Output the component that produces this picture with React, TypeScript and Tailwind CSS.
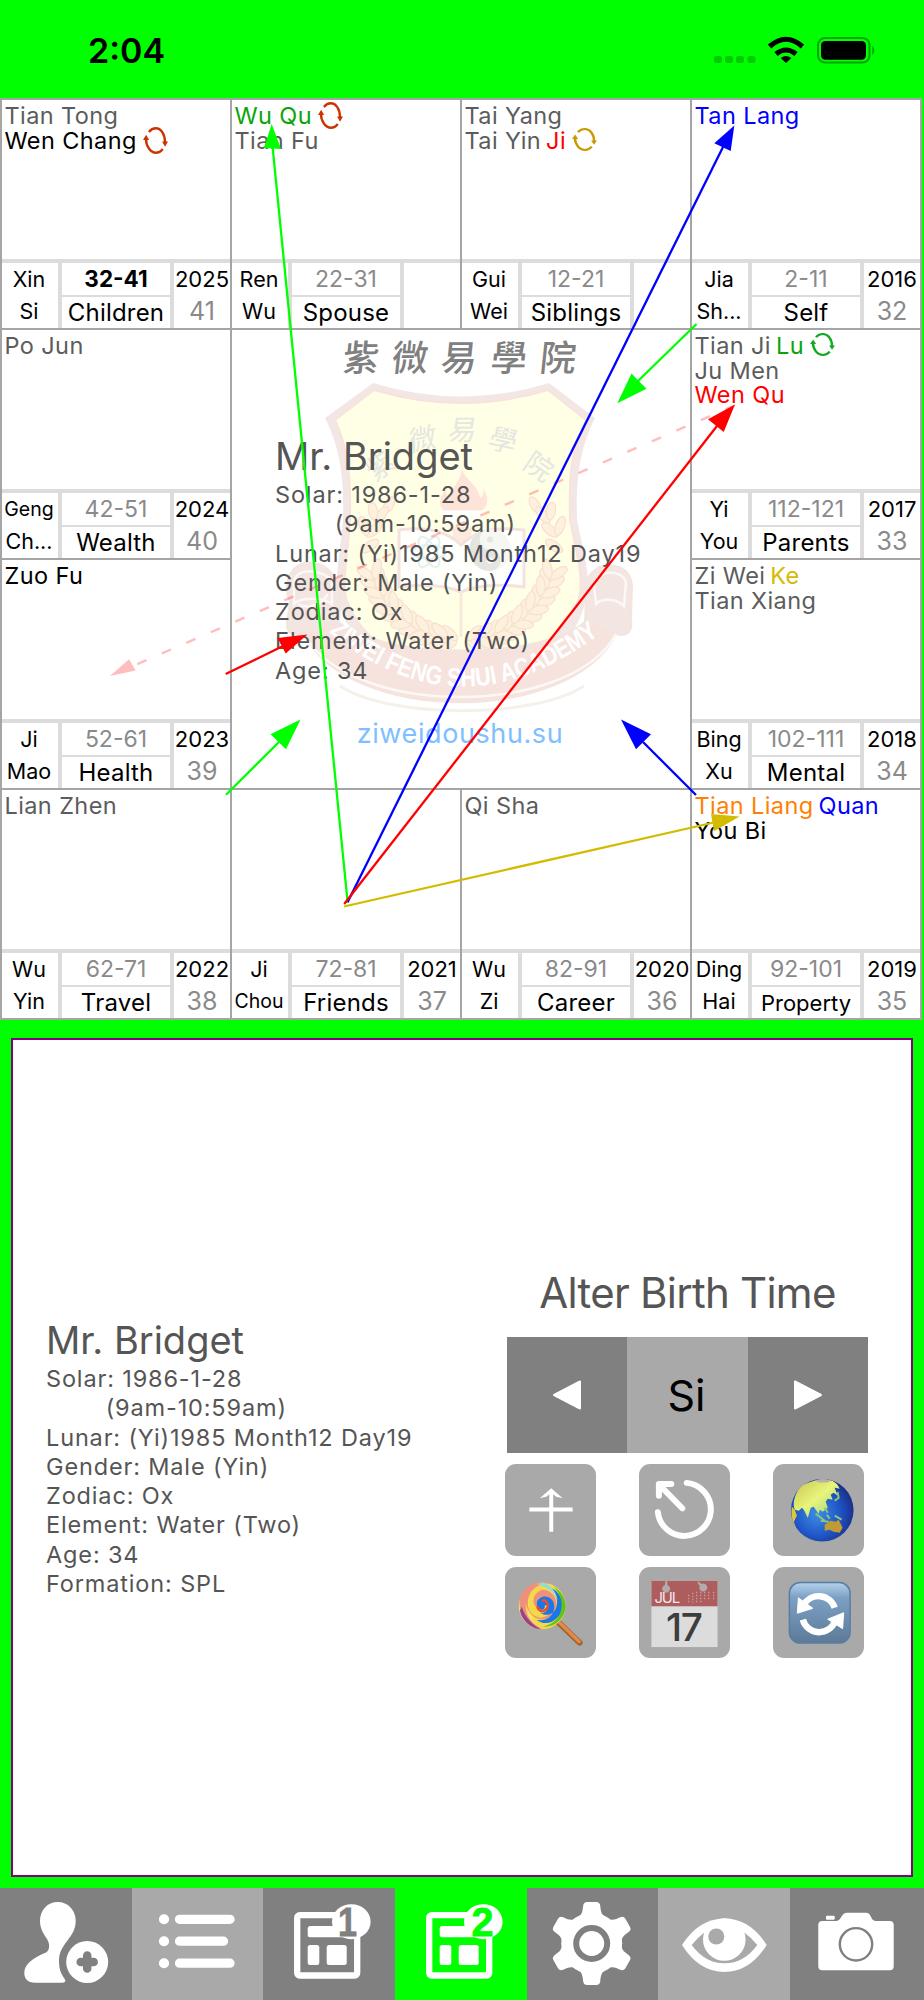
import type { ReactNode } from 'react';

interface Star {
  name: string;
  color?: string;
  tag?: string;
  tagColor?: string;
  cycle?: string;
  tall?: boolean;
}

interface Palace {
  stem: string;
  branch: string;
  range: string;
  name: string;
  year?: string;
  age?: string;
  active?: boolean;
  stars: Star[];
  place: string;
}

const PALACES: Palace[] = [
  {
    stem: 'Xin', branch: 'Si', range: '32-41', name: 'Children', year: '2025', age: '41', active: true,
    place: 'col-start-1 row-start-1',
    stars: [{ name: 'Tian Tong' }, { name: 'Wen Chang', color: 'text-black', cycle: '#cc3300', tall: true }],
  },
  {
    stem: 'Ren', branch: 'Wu', range: '22-31', name: 'Spouse', place: 'col-start-2 row-start-1',
    stars: [{ name: 'Wu Qu', color: 'text-[#0aa50a]', cycle: '#cc3300', tall: true }, { name: 'Tian Fu' }],
  },
  {
    stem: 'Gui', branch: 'Wei', range: '12-21', name: 'Siblings', place: 'col-start-3 row-start-1',
    stars: [{ name: 'Tai Yang' }, { name: 'Tai Yin', tag: 'Ji', tagColor: 'text-[#ff0000]', cycle: '#c99a00' }],
  },
  {
    stem: 'Jia', branch: 'Sh...', range: '2-11', name: 'Self', year: '2016', age: '32',
    place: 'col-start-4 row-start-1',
    stars: [{ name: 'Tan Lang', color: 'text-[#0000ff]' }],
  },
  {
    stem: 'Geng', branch: 'Ch...', range: '42-51', name: 'Wealth', year: '2024', age: '40',
    place: 'col-start-1 row-start-2',
    stars: [{ name: 'Po Jun' }],
  },
  {
    stem: 'Yi', branch: 'You', range: '112-121', name: 'Parents', year: '2017', age: '33',
    place: 'col-start-4 row-start-2',
    stars: [
      { name: 'Tian Ji', tag: 'Lu', tagColor: 'text-[#0aa50a]', cycle: '#11aa22' },
      { name: 'Ju Men' },
      { name: 'Wen Qu', color: 'text-[#ff0000]' },
    ],
  },
  {
    stem: 'Ji', branch: 'Mao', range: '52-61', name: 'Health', year: '2023', age: '39',
    place: 'col-start-1 row-start-3',
    stars: [{ name: 'Zuo Fu', color: 'text-black' }],
  },
  {
    stem: 'Bing', branch: 'Xu', range: '102-111', name: 'Mental', year: '2018', age: '34',
    place: 'col-start-4 row-start-3',
    stars: [{ name: 'Zi Wei', tag: 'Ke', tagColor: 'text-[#d4bb00]' }, { name: 'Tian Xiang' }],
  },
  {
    stem: 'Wu', branch: 'Yin', range: '62-71', name: 'Travel', year: '2022', age: '38',
    place: 'col-start-1 row-start-4',
    stars: [{ name: 'Lian Zhen' }],
  },
  {
    stem: 'Ji', branch: 'Chou', range: '72-81', name: 'Friends', year: '2021', age: '37',
    place: 'col-start-2 row-start-4',
    stars: [],
  },
  {
    stem: 'Wu', branch: 'Zi', range: '82-91', name: 'Career', year: '2020', age: '36',
    place: 'col-start-3 row-start-4',
    stars: [{ name: 'Qi Sha' }],
  },
  {
    stem: 'Ding', branch: 'Hai', range: '92-101', name: 'Property', year: '2019', age: '35',
    place: 'col-start-4 row-start-4',
    stars: [
      { name: 'Tian Liang', color: 'text-[#ff8000]', tag: 'Quan', tagColor: 'text-[#0000ff]' },
      { name: 'You Bi', color: 'text-black' },
    ],
  },
];

const PROFILE = [
  'Solar: 1986-1-28',
  '        (9am-10:59am)',
  'Lunar: (Yi)1985 Month12 Day19',
  'Gender: Male (Yin)',
  'Zodiac: Ox',
  'Element: Water (Two)',
  'Age: 34',
];

function CycleIcon({ color, tall }: { color: string; tall?: boolean }) {
  return (
    <svg
      viewBox="0 0 25.3 27.3"
      preserveAspectRatio="none"
      className={tall ? 'ml-[6px] mt-[-1px] h-[27px] w-[25px] shrink-0' : 'ml-[6px] mt-[-3px] h-[23px] w-[25px] shrink-0'}
    >
      <g fill="none" stroke={color} strokeWidth="2.4">
        <path d="M3 12C3 20 8 26 13 26c3 0 5-1 7-3.800" />
        <path d="M6 5C8 2.500 10 1.300 13 1.300 18 1.300 22.300 7 22.300 15.500" />
      </g>
      <path d="M3.200 7.800l3 5.400H0zM22.300 20l-3-5.300h6z" fill={color} />
    </svg>
  );
}

function PalaceCell({ palace }: { palace: Palace }) {
  const stemSize = palace.stem === 'Geng' ? 'text-[19.5px]' : 'text-[21.5px]';
  const branchSize = palace.branch === 'Chou' ? 'text-[19.5px]' : 'text-[21.5px]';
  return (
    <div className={`flex flex-col border-l-2 border-t-2 border-[#a5a5a5] ${palace.place}`}>
      <div className="h-[159px] pl-[2.5px] pt-1 text-[23.5px] leading-[24.5px] tracking-[0.4px] text-[#5c5c5c]">
        {palace.stars.map(star => (
          <div key={star.name} className="flex h-[24.5px] items-center whitespace-nowrap">
            <span className={star.color}>{star.name}</span>
            {star.tag && <span className={`ml-[5px] ${star.tagColor}`}>{star.tag}</span>}
            {star.cycle && <CycleIcon color={star.cycle} tall={star.tall} />}
          </div>
        ))}
      </div>
      <div className="flex h-[69px] gap-1 border-t-4 border-[#dcdcdc] bg-[#dcdcdc] text-center whitespace-nowrap">
        <div className="flex w-14 flex-col bg-white pr-[2px] text-black">
          <span className={`h-8 leading-[33px] ${stemSize}`}>{palace.stem}</span>
          <span className={`h-8 leading-[32px] ${branchSize}`}>{palace.branch}</span>
        </div>
        <div className="flex w-[108px] flex-col gap-[2px]">
          <span
            className={
              palace.active
                ? 'h-8 bg-white text-[22.5px] font-bold leading-[32px] text-black'
                : 'h-8 bg-white text-[23px] leading-[32px] text-[#8a8a8a]'
            }
          >
            {palace.range}
          </span>
          <span
            className={
              palace.name === 'Property'
                ? 'h-[31px] bg-white text-[22px] leading-[33px] text-black'
                : 'h-[31px] bg-white text-[24px] leading-[31px] tracking-[0.2px] text-black'
            }
          >
            {palace.name}
          </span>
        </div>
        <div className="flex w-14 flex-col items-center bg-white">
          <span className="h-8 text-[22px] leading-[32px] text-black">{palace.year}</span>
          <span className="h-8 text-[25px] leading-[32px] text-[#8a8a8a]">{palace.age}</span>
        </div>
      </div>
    </div>
  );
}

const LEAVES = [0, 1, 2, 3, 4, 5];

function Laurel() {
  return (
    <g fill="#fdf0dc" stroke="#f8dfd0" strokeWidth="1.2">
      {LEAVES.map(i => (
        <g key={i} transform={`rotate(${22 + i * 12} 462 545)`}>
          <ellipse cx="563" cy="545" rx="4.5" ry="10" transform="rotate(35 563 545)" />
          <ellipse cx="551" cy="545" rx="4.5" ry="10" transform="rotate(-35 551 545)" />
          <ellipse cx="562" cy="535" rx="4.5" ry="10" transform="rotate(35 562 535)" />
          <ellipse cx="550" cy="535" rx="4.5" ry="10" transform="rotate(-35 550 535)" />
        </g>
      ))}
      <ellipse cx="535" cy="505" rx="4.5" ry="9" transform="rotate(-30 535 505)" />
      <ellipse cx="543" cy="515" rx="4.5" ry="10" transform="rotate(-40 543 515)" />
      <ellipse cx="550" cy="530" rx="4.5" ry="10" transform="rotate(-50 550 530)" />
      <ellipse cx="554" cy="546" rx="4.5" ry="10" transform="rotate(-55 554 546)" />
      <ellipse cx="551" cy="511" rx="4.5" ry="9" transform="rotate(10 551 511)" />
      <ellipse cx="560" cy="526" rx="4.5" ry="10" transform="rotate(20 560 526)" />
    </g>
  );
}

function Crest() {
  return (
    <svg viewBox="232 330 458 458" className="absolute inset-0 h-full w-full">
      <path
        d="M373 383Q462 410 549 383L595 418C579 450 576 480 577 520C584 555 592 580 586 600C570 660 520 690 462 690C404 690 354 660 338 600C334 580 340 555 343 520C344 480 341 450 325 418Z"
        fill="#f3e7e5"
      />
      <path
        d="M374 390Q462 416 548 390L586 420C570 450 569 480 570 520C577 555 584 580 579 598C560 645 515 668 462 668C409 668 362 645 346 598C342 580 348 555 350 520C351 480 349 450 335 420Z"
        fill="#ffffe6"
        stroke="#f8e3dc"
        strokeWidth="2"
      />
      <g fill="#e6e6e0" fontSize="28" fontFamily="'Noto Sans CJK TC', sans-serif" textAnchor="middle">
        <text transform="translate(386 474) rotate(-36)">紫</text>
        <text transform="translate(423 449) rotate(-12) skewX(-10)">微</text>
        <text transform="translate(461 440) skewX(-10)">易</text>
        <text transform="translate(500 450) rotate(12) skewX(-6)">學</text>
        <text transform="translate(533 475) rotate(34)">院</text>
      </g>
      <path
        d="M462 468c2 12 16 16 18 30c4-3 4-6 3-10c8 12 4 20-4 24h-33c-8-5-8-14 0-22c0 4 1 6 3 7c2-9 12-15 13-29z"
        fill="#fde3d8"
      />
      <path d="M440 513h44M447 520h30" stroke="#fff" strokeWidth="5" />
      <path d="M452 527h20l-4 42h-12z" fill="#fde9de" />
      <Laurel />
      <g transform="translate(924 0) scale(-1 1)">
        <Laurel />
      </g>
      <path d="M399 530Q440 524 461 545Q482 524 524 530V587Q484 582 461 592Q438 582 399 587Z" fill="#fffffb" stroke="#f3e2df" strokeWidth="3" />
      <g fill="none" stroke="#e2f0f0" strokeWidth="2">
        <ellipse cx="429" cy="552" rx="17" ry="7" />
        <ellipse cx="429" cy="552" rx="17" ry="7" transform="rotate(60 429 552)" />
        <ellipse cx="429" cy="552" rx="17" ry="7" transform="rotate(120 429 552)" />
      </g>
      <circle cx="490" cy="550" r="21" fill="#f6f6f3" />
      <path d="M490 529a21 21 0 0 0 0 42a10.500 10.500 0 0 0 0-21a10.500 10.500 0 0 1 0-21z" fill="#e4e4e0" />
      <circle cx="490" cy="539.500" r="3" fill="#e4e4e0" />
      <circle cx="490" cy="560.500" r="3" fill="#fff" />
      <path d="M461 592v45" stroke="#f6ead8" strokeWidth="3" />
      {/* ribbon */}
      <path
        d="M304 563C286 568 284 590 290 602L287 622C286 634 294 638 304 634C350 725 570 725 616 634C626 637 633 632 631 620L632 585C630 568 614 562 600 567C588 572 582 588 586 600L585 622C540 660 384 660 339 622L341 596C338 572 322 560 304 563Z"
        fill="#f3e5e1"
        stroke="#f1e6de"
        strokeWidth="2"
      />
      <path d="M337 622C384 660 540 660 587 622L617 634C570 725 350 725 303 634Z" fill="#f6e3de" />
      <g fill="none" stroke="#fcf8f6" strokeWidth="2.5">
        <path d="M294 582c2-14 24-14 38-2v24c-10-8-34-6-38 0zM594 584c6-16 28-14 32-2l-2 24c-8-8-22-8-28-2zM298 604c10 6 24 0 30-10" />
        <path d="M304 634C350 718 570 718 616 634" />
      </g>
      <path d="M340 686C390 719 534 719 584 686" fill="none" stroke="#f5f1ea" strokeWidth="3" />
      <path id="motto" d="M329 632Q462 742 605 630" fill="none" />
      <text fill="#fff" fontSize="26" fontWeight="700" fontFamily="'Liberation Sans', sans-serif" textLength="296" lengthAdjust="spacingAndGlyphs">
        <textPath href="#motto">ZIWEI FENG SHUI ACADEMY</textPath>
      </text>
    </svg>
  );
}

function ArrowLayer() {
  return (
    <svg viewBox="0 98 924 922" className="pointer-events-none absolute left-0 top-0 h-[922px] w-[924px]">
      <g opacity="0.25" stroke="#ff0000" fill="#ff0000">
        <path d="M734.500 405.500L134 665.500" strokeWidth="2.400" strokeDasharray="10 16.700" />
        <path d="M110 676L129 659.300L135.700 670.500Z" stroke="none" />
      </g>
      <g strokeWidth="2.300">
        <path d="M347.700 903L272.700 148" stroke="#00ff00" />
        <path d="M271.700 124L264 148L281 149Z" fill="#00ff00" />
        <path d="M696.500 324L638 381" stroke="#00ff00" />
        <path d="M617.300 403.300L631.500 373.500L646.500 388.700Z" fill="#00ff00" />
        <path d="M226 794.700L279 742" stroke="#00ff00" />
        <path d="M300.500 719.500L270.500 734.300L286 749.300Z" fill="#00ff00" />
        <path d="M347.700 902L723 147" stroke="#0000ff" />
        <path d="M734.300 125.500L714.300 143.300L730.700 151Z" fill="#0000ff" />
        <path d="M696 795L643 742" stroke="#0000ff" />
        <path d="M621 719.500L651 734.300L636 749.300Z" fill="#0000ff" />
        <path d="M344.200 904L717 426" stroke="#ff0000" />
        <path d="M735 404.500L708 419.300L723.700 432Z" fill="#ff0000" />
        <path d="M225.700 674L283 646" stroke="#ff0000" />
        <path d="M307.500 634.500L277.500 638L285.700 653.500Z" fill="#ff0000" />
        <path d="M344 906.500L714 822.500" stroke="#d4bb00" />
        <path d="M739.500 816.500L711 814L714 831.300Z" fill="#d4bb00" />
      </g>
    </svg>
  );
}

function Profile({ formation }: { formation?: string }) {
  return (
    <div className="text-[#555]">
      <h2 className="text-[38px] leading-[44px]">Mr. Bridget</h2>
      <div className="whitespace-pre pt-[2px] text-[23.5px] leading-[29.3px] tracking-[0.85px]">
        {PROFILE.map(line => (
          <p key={line}>{line}</p>
        ))}
        {formation && <p>Formation: {formation}</p>}
      </div>
    </div>
  );
}

function StatusBar() {
  return (
    <header className="flex h-[98px] items-start justify-between pl-[88px] pr-[48px]">
      <span className="mt-[30px] text-[34px] font-semibold leading-[41px] text-black">2:04</span>
      <svg viewBox="712 34 164 32" className="mt-[34px] h-8 w-[164px]">
        <g fill="#00cc00">
          <rect x="714" y="56" width="8" height="7" rx="2.500" />
          <rect x="725" y="56" width="8" height="7" rx="2.500" />
          <rect x="736" y="56" width="8" height="7" rx="2.500" />
          <rect x="747.500" y="56" width="8" height="7" rx="2.500" />
        </g>
        <path d="M786 63l-5.300-5q5.300-4 10.600 0z" />
        <path d="M776 54q10-8 20 0M769.500 46.500q16.500-14.500 33 0" fill="none" stroke="#000" strokeWidth="5" />
        <rect x="818" y="38" width="51.500" height="24.500" rx="7" fill="none" stroke="#00a600" strokeWidth="2" />
        <rect x="821" y="41" width="45" height="18.700" rx="4.500" />
        <path d="M872.300 45.500q4 5 0 10z" fill="#00a600" />
      </svg>
    </header>
  );
}

function ToolButton({ children, label }: { children: ReactNode; label: string }) {
  return (
    <button type="button" aria-label={label} className="h-[91.5px] w-[91.5px] rounded-[11px] bg-[#a9a9a9]">
      <svg viewBox="0 0 92 92" className="h-full w-full">
        {children}
      </svg>
    </button>
  );
}

function Tools() {
  return (
    <div className="ml-[-2.5px] mt-[11px] grid w-[360px] grid-cols-[134px_134px_92px] gap-y-[11px]">
      <ToolButton label="Direction">
        <path d="M46.500 68V27M24.500 45.800H68" stroke="#fff" strokeWidth="4" />
        <path d="M46.500 24.500L58 34.500L51.500 33L46.500 29L41.500 33L35 34.500Z" fill="#fff" />
      </ToolButton>
      <ToolButton label="Rewind">
        <g fill="none" stroke="#fff" strokeWidth="6" strokeLinecap="round" strokeLinejoin="round">
          <path d="M48 19A26.700 26.700 0 1 1 19 48.500" />
          <path d="M43.500 44.500L20 20.500M32.500 20H20V32" />
        </g>
      </ToolButton>
      <ToolButton label="World">
        <defs>
          <radialGradient id="sea" cx="0.42" cy="0.55" r="0.6">
            <stop offset="0" stopColor="#3f8fe0" />
            <stop offset="0.6" stopColor="#1f56c8" />
            <stop offset="1" stopColor="#1a2d86" />
          </radialGradient>
          <linearGradient id="land" x1="0" y1="0" x2="1" y2="1">
            <stop offset="0" stopColor="#c9c653" />
            <stop offset="0.5" stopColor="#e8f57a" />
            <stop offset="1" stopColor="#8fd08a" />
          </linearGradient>
        </defs>
        <circle cx="49.500" cy="46.500" r="31.500" fill="url(#sea)" />
        <path
          d="M28 23C35 17 50 14 60 17C64 19 66 22 67 25L62 24L65 32L61 29L58 31L60 36L55 35L53 38L55 44L50 48L47 46L46 50L43 46L41 43L38 44L35 54L31 46L29 44L26 47L22 46C19 40 22 29 28 23Z"
          fill="url(#land)"
        />
        <path d="M19 43l3 3l2 6l-3 6l2 6c-4-6-5-14-4-21z" fill="#d8c83a" />
        <path d="M42 16.500q8-3 16 0l-3 2h-9z" fill="#b5b2a6" />
        <path d="M52 61l6-4l5 1l3-2l4 8l-3 5l-6-1l-4-2l-5 1z" fill="#c09a35" />
        <path d="M43 50l9 7M48 57l8 1M54 51l3 4M62 52l7 4M52 44l3 5M65 28l1 6l-4 3" stroke="#8fc47c" strokeWidth="2" fill="none" />
      </ToolButton>
      <ToolButton label="Lollipop">
        <path d="M54 56L75 76" stroke="#a8602c" strokeWidth="6" strokeLinecap="round" />
        <path d="M54 55L74.500 75" stroke="#dd8c4c" strokeWidth="3.500" strokeLinecap="round" />
        <circle cx="37.500" cy="39" r="23.500" fill="#f4d84a" />
        <path d="M37.500 39C44 29 32 24 26 31C19 40 24 54 37 62.500A23.500 23.500 0 0 1 14.500 34C18 40 22 48 31 55C18 40 24 26 38 26C48 27 52 36 47 43Z" fill="#f2e96a" />
        <path d="M38 40C30 36 32 29 39 30C51 32 50 50 36 51C23 50 19 35 27 24C31 19 40 15 46 17A23.500 23.500 0 0 0 15 31C12 48 24 62 38 62.500C24 56 20 46 21 36C23 51 38 58 48 48C57 38 49 22 37 23C25 27 27 43 37 42Z" fill="#f0907c" />
        <path d="M40 39C41 45 32 44 32 37C32 29 43 27 48 34C53 44 45 56 32 53C41 61 56 54 58 40C58 29 51 21 42 20C53 25 54 35 51 42C48 49 38 50 35 45C38 48 44 45 43 38Z" fill="#1878e8" />
        <path d="M61 40C60 52 50 61 38 60C49 58 57 50 57 38C57 31 54 25 49 20C57 24 61 32 61 40Z" fill="#62c41a" />
        <path d="M32 17C40 20 48 22 53 33C51 23 45 18 38 15.500Z" fill="#8adfe0" />
        <path d="M15 44C17 54 26 62 36 62.500C27 58 20 50 17 40Z" fill="#9b3f8f" />
        <path d="M37 34C42 32 45 39 41 43C37 46 32 43 33 39" fill="none" stroke="#ee4b35" strokeWidth="2.500" />
      </ToolButton>
      <ToolButton label="Calendar">
        <rect x="12.500" y="14" width="66.500" height="66.500" fill="#dcdcdc" />
        <rect x="12.500" y="14" width="66.500" height="25.500" fill="#ad5d5d" />
        <path d="M26.500 14h2v4a4 4 0 1 1-2.500 0zM59 14l4 3a4 4 0 1 1-2 2l-2-3z" fill="#b5aaaa" />
        <g stroke="#cc9b9b" strokeWidth="1.300" strokeDasharray="1.500 1.500">
          <path d="M50 28v9M54 26v10M58 25v11M62 25v11M66 25v9M70 25v9M75 25v9" />
        </g>
        <text x="15.500" y="36" fill="#f3e9e9" fontSize="15" textLength="26">JUL</text>
        <text x="45" y="74" textAnchor="middle" fill="#3d3d3d" fontSize="39" fontWeight="500" letterSpacing="-1.500">17</text>
      </ToolButton>
      <ToolButton label="Refresh">
        <defs>
          <linearGradient id="tile" x1="0" y1="0" x2="0" y2="1">
            <stop offset="0" stopColor="#b5d2ec" />
            <stop offset="0.25" stopColor="#7ca0c4" />
            <stop offset="1" stopColor="#5d7a98" />
          </linearGradient>
        </defs>
        <rect x="16.500" y="15.500" width="61" height="61" rx="11" fill="url(#tile)" stroke="#557ea3" strokeWidth="1.500" />
        <g fill="none" stroke="#fff" strokeWidth="6.500">
          <path d="M31 38A17 17 0 0 1 62 41" />
          <path d="M30 53A17 17 0 0 0 62.500 54" />
        </g>
        <path d="M25.500 31L24.500 46.500L40 41.500ZM55 52.500L71 46L70 62Z" fill="#fff" stroke="#fff" strokeLinejoin="round" />
      </ToolButton>
    </div>
  );
}

function PageIcon({ n, hole }: { n: string; hole: string }) {
  return (
    <>
      <rect x="34.200" y="27.200" width="60" height="60.300" rx="2.500" fill="none" stroke="#fff" strokeWidth="6.300" />
      <path d="M47 38H84V49.300H47Q44.700 49.300 44.700 47V40.500Q44.700 38 47 38Z" fill="#fff" />
      <rect x="44.700" y="57" width="11.600" height="20" rx="2.500" fill="#fff" />
      <rect x="63.700" y="57" width="20" height="20" rx="2.500" fill="#fff" />
      <ellipse cx="88.300" cy="33.700" rx="19.300" ry="17.500" fill="#fff" />
      <text
        x={n === '1' ? 75 : 76.5}
        y="48"
        fill={hole}
        fontSize="40"
        fontWeight="700"
        fontFamily="'Liberation Sans', sans-serif"
        stroke={hole}
        strokeWidth="0.8"
        textLength={n === '1' ? 19 : 22}
        lengthAdjust="spacingAndGlyphs"
      >
        {n}
      </text>
    </>
  );
}

const TOOTH = 'M-14-26C-9-29-9-34-8.500-38Q-8-41.500-4.500-41.500H4.500Q8-41.500 8.500-38C9-34 9-29 14-26Z';

const TABS: { label: string; bg: string; icon: ReactNode }[] = [
  {
    label: 'Add person',
    bg: 'bg-[#808080]',
    icon: (
      <>
        <path
          d="M57.700 14C68 14 75.700 22 75.700 33C75.700 50 59 55 59 73C59 83 62 87 65 91.500C66 93.500 65 94.700 62 94.700H35C28 94.700 24.300 91 24.300 85C24.300 76 33 70 46 64.500C50 62 50 56 47 51C43 45 40 40 40 33C40 22 47.500 14 57.700 14Z"
          fill="#fff"
        />
        <circle cx="87.200" cy="74" r="21" fill="#fff" />
        <path d="M87.200 67.500V80.500M80.700 74H93.700" stroke="#808080" strokeWidth="8.500" strokeLinecap="round" />
      </>
    ),
  },
  {
    label: 'List',
    bg: 'bg-[#a9a9a9]',
    icon: (
      <g stroke="#fff" strokeWidth="9.300" strokeLinecap="round">
        <path d="M31.900 31.300h.2M31.900 53.200h.2M31.900 75.200h.2" strokeWidth="10" />
        <path d="M47.500 31.300H98M47.500 53.200H91.500M47.500 75.200H98" />
      </g>
    ),
  },
  { label: 'Page 1', bg: 'bg-[#808080]', icon: <PageIcon n="1" hole="#808080" /> },
  { label: 'Page 2', bg: 'bg-[#00ff00]', icon: <PageIcon n="2" hole="#00ff00" /> },
  {
    label: 'Settings',
    bg: 'bg-[#808080]',
    icon: (
      <g transform="translate(64.700 55.500)" fill="#fff">
        <circle r="30.500" />
        <path d={TOOTH} />
        <path d={TOOTH} transform="rotate(60)" />
        <path d={TOOTH} transform="rotate(120)" />
        <path d={TOOTH} transform="rotate(180)" />
        <path d={TOOTH} transform="rotate(240)" />
        <path d={TOOTH} transform="rotate(300)" />
        <circle r="15.500" fill="none" stroke="#808080" strokeWidth="6" />
      </g>
    ),
  },
  {
    label: 'View',
    bg: 'bg-[#a9a9a9]',
    icon: (
      <>
        <path d="M24 57Q41 30.500 66.500 30.500Q92 30.500 108.700 57Q92 84 66.500 84Q41 84 24 57Z" fill="#fff" />
        <path d="M33.700 57Q39 50 46 44.700H86.500Q94 50 99.300 57Q86 75.300 66.500 75.300Q47 75.300 33.700 57Z" fill="#a9a9a9" />
        <circle cx="66.300" cy="51.500" r="21.300" fill="#fff" />
        <circle cx="58.300" cy="48.500" r="8" fill="#a9a9a9" />
      </>
    ),
  },
  {
    label: 'Camera',
    bg: 'bg-[#808080]',
    icon: (
      <>
        <path
          d="M32.300 33H45C49 33 50 31 51.500 28.500Q53.500 24.700 57 24.700H76Q79 24.700 80.500 28C82 31 83 33 87 33H99.700Q103.700 33 103.700 37V78.300Q103.700 82.300 99.700 82.300H32.300Q28.300 82.300 28.300 78.300V37Q28.300 33 32.300 33Z"
          fill="#fff"
        />
        <rect x="36" y="27.700" width="8.700" height="4" rx="1" fill="#fff" />
        <circle cx="66" cy="56.300" r="16.200" fill="none" stroke="#808080" strokeWidth="2.400" />
      </>
    ),
  },
];

export default function App() {
  return (
    <div className="flex h-[2000px] w-[924px] flex-col overflow-hidden bg-[#00ff00] font-['Inter','Noto_Sans_CJK_TC',sans-serif]">
      <StatusBar />

      <section className="relative grid h-[922px] w-[922px] shrink-0 grid-cols-[repeat(4,230px)] grid-rows-[repeat(4,230px)] border-b-2 border-r-2 border-[#a5a5a5] bg-white">
        {PALACES.map(palace => (
          <PalaceCell key={palace.name} palace={palace} />
        ))}
        <div className="relative col-span-2 col-start-2 row-span-2 row-start-2 flex flex-col border-l-2 border-t-2 border-[#a5a5a5]">
          <Crest />
          <div className="relative flex h-full flex-col">
            <p className="mt-1 flex h-12 justify-center gap-[13px] pr-[3px] text-[36px] font-medium leading-[48px] text-[#808080]">
              <span className="-skew-x-6">紫</span>
              <span className="-skew-x-6">微</span>
              <span className="-skew-x-6">易</span>
              <span className="-skew-x-6">學</span>
              <span className="-skew-x-6">院</span>
            </p>
            <div className="mt-[52px] pl-[43px]">
              <Profile />
            </div>
            <p className="mt-[31px] pr-[2px] text-center text-[27px] leading-[36px] tracking-[0.6px] text-[#80bfff]">ziweidoushu.su</p>
          </div>
        </div>
        <ArrowLayer />
      </section>

      <main className="ml-[11px] mt-[18px] flex h-[839px] w-[902px] border-2 border-[#800080] bg-white">
        <div className="w-[494px] pl-[33px] pt-[278px]">
          <Profile formation="SPL" />
        </div>
        <div className="w-[361px] pt-[227px]">
          <h1 className="text-center text-[42px] leading-[52px] tracking-[-0.75px] text-[#555]">Alter Birth Time</h1>
          <div className="mt-[18px] grid h-[116px] grid-cols-3">
            <button type="button" aria-label="Earlier" className="flex items-center justify-center bg-[#808080]">
              <svg viewBox="0 0 30 30" className="h-[30px] w-[30px]">
                <path d="M28 1.500V28.500L2 15Z" fill="#fff" stroke="#fff" strokeWidth="2" strokeLinejoin="round" />
              </svg>
            </button>
            <span className="bg-[#a9a9a9] pr-[2px] text-center text-[43px] leading-[116px] text-black">Si</span>
            <button type="button" aria-label="Later" className="flex items-center justify-center bg-[#808080]">
              <svg viewBox="0 0 30 30" className="h-[30px] w-[30px]">
                <path d="M2 1.500V28.500L28 15Z" fill="#fff" stroke="#fff" strokeWidth="2" strokeLinejoin="round" />
              </svg>
            </button>
          </div>
          <Tools />
        </div>
      </main>

      <nav className="mt-[11px] grid h-[112px] grid-cols-[repeat(6,131.7px)_1fr]">
        {TABS.map(tab => (
          <button key={tab.label} type="button" aria-label={tab.label} className={tab.bg}>
            <svg viewBox="0 0 132 112" className="h-[112px] w-[132px]">
              {tab.icon}
            </svg>
          </button>
        ))}
      </nav>
    </div>
  );
}
